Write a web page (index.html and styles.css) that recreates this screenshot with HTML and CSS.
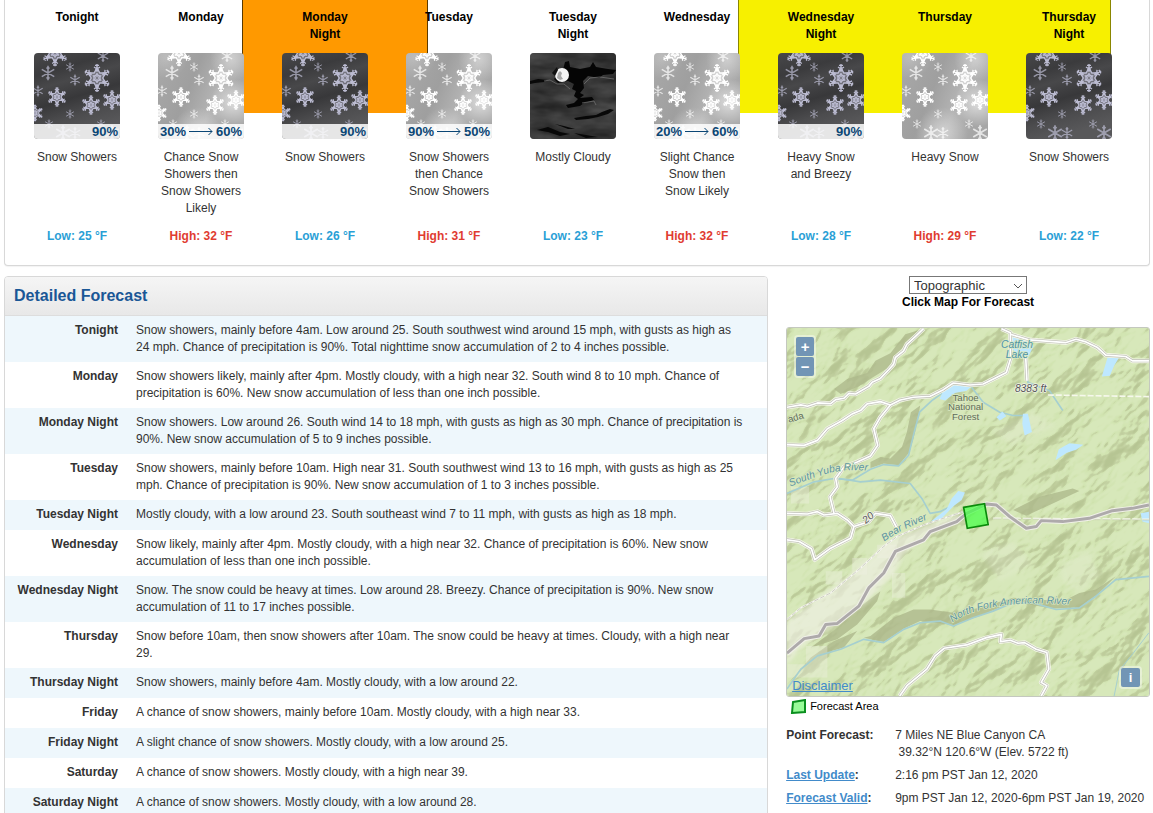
FILE: index.html
```html
<!DOCTYPE html>
<html lang="en">
<head>
  <meta charset="UTF-8">
  <meta name="viewport" content="width=device-width, initial-scale=1">
  <title>7-Day Forecast</title>
  <link rel="stylesheet" href="styles.css">
</head>
<body>

  <!-- shared icon artwork -->
  <svg class="defs" aria-hidden="true">
    <defs>
      <linearGradient id="nightSky" x1="0" y1="0" x2="0.3" y2="1">
        <stop offset="0" stop-color="#48484a"/>
        <stop offset="0.25" stop-color="#3b3b3d"/>
        <stop offset="0.4" stop-color="#48484a"/>
        <stop offset="0.6" stop-color="#38383a"/>
        <stop offset="0.8" stop-color="#4c4c4e"/>
        <stop offset="1" stop-color="#58585a"/>
      </linearGradient>
      <linearGradient id="daySky" x1="0" y1="0" x2="1" y2="0.4">
        <stop offset="0" stop-color="#a9a9a9"/>
        <stop offset="0.45" stop-color="#9f9f9f"/>
        <stop offset="0.75" stop-color="#b4b4b4"/>
        <stop offset="1" stop-color="#a6a6a6"/>
      </linearGradient>
      <radialGradient id="glow">
        <stop offset="0" stop-color="#fff" stop-opacity="0.6"/>
        <stop offset="1" stop-color="#fff" stop-opacity="0"/>
      </radialGradient>
      <g id="arm">
        <path d="M0-6V-14M-2-12.6H2M-3-11L0-9L3-11M-1.8-8.4L0-7L1.8-8.4M0-1V-5"/>
      </g>
      <g id="flake">
        <path fill="currentColor" fill-opacity="0.4" d="M0-10L2.9-5L8.7-5L5.8 0L8.7 5L2.9 5L0 10L-2.9 5L-8.7 5L-5.8 0L-8.7-5L-2.9-5Z"/>
        <use href="#arm"/>
        <use href="#arm" transform="rotate(60)"/>
        <use href="#arm" transform="rotate(120)"/>
        <use href="#arm" transform="rotate(180)"/>
        <use href="#arm" transform="rotate(240)"/>
        <use href="#arm" transform="rotate(300)"/>
        <path d="M0-3.5L3-1.8V1.8L0 3.5L-3 1.8V-1.8Z"/>
      </g>
      <g id="star">
        <path d="M0-6V6M-5.2-3L5.2 3M-5.2 3L5.2-3M-1.2-4.6L0-3.2L1.2-4.6M-1.2 4.6L0 3.2L1.2 4.6"/>
      </g>
      <g id="flakes" fill="none">
        <g stroke-width="1.4">
          <use href="#flake" transform="translate(63 25)"/>
          <use href="#flake" transform="translate(21 0) scale(0.95)"/>
        </g>
        <g stroke-width="1.7">
          <use href="#flake" transform="translate(23 44) scale(0.7)"/>
          <use href="#flake" transform="translate(57 52) scale(0.7)"/>
          <use href="#flake" transform="translate(78 47) scale(0.7)"/>
          <use href="#flake" transform="translate(1 60) scale(0.6)"/>
        </g>
        <g stroke-width="1.3" opacity="0.7">
          <use href="#star" transform="translate(14 20) scale(1.2)"/>
          <use href="#star" transform="translate(36 14) scale(0.75)"/>
          <use href="#star" transform="translate(41 27) scale(0.9)"/>
          <use href="#star" transform="translate(69 3)"/>
          <use href="#star" transform="translate(4 38) scale(0.9)"/>
          <use href="#star" transform="translate(36 61) scale(0.75)"/>
          <use href="#star" transform="translate(15 71) scale(0.75)"/>
          <use href="#star" transform="translate(67 71) scale(0.75)"/>
          <use href="#star" transform="translate(29 80) scale(1.3)"/>
          <use href="#star" transform="translate(41 80)"/>
          <use href="#star" transform="translate(78 80) scale(1.3)"/>
        </g>
      </g>
      <symbol id="nightSnow" viewBox="0 0 86 86">
        <rect width="86" height="86" fill="url(#nightSky)"/>
        <use href="#flakes" stroke="#bcbcd2" color="#bcbcd2"/>
      </symbol>
      <symbol id="daySnow" viewBox="0 0 86 86">
        <rect width="86" height="86" fill="url(#daySky)"/>
        <circle cx="76" cy="50" r="24" fill="url(#glow)"/>
        <circle cx="8" cy="4" r="22" fill="url(#glow)" opacity="0.4"/>
        <circle cx="40" cy="80" r="26" fill="url(#glow)" opacity="0.7"/>
        <circle cx="74" cy="6" r="22" fill="url(#glow)" opacity="0.6"/>
        <use href="#flakes" stroke="#fff" color="#fff"/>
      </symbol>
      <filter id="cloudNoise" x="0" y="0" width="1" height="1" color-interpolation-filters="sRGB">
        <feTurbulence type="fractalNoise" baseFrequency="0.03 0.08" numOctaves="3" seed="4"/>
        <feColorMatrix values="0.4 0 0 0 0.02  0.4 0 0 0 0.02  0.4 0 0 0 0.02  0 0 0 0 1"/>
      </filter>
      <symbol id="nightCloud" viewBox="0 0 86 86">
        <rect width="86" height="86" fill="#3c3c3c"/>
        <rect width="86" height="86" filter="url(#cloudNoise)" opacity="0.6"/>
        <path fill="#050505" d="M33 17L35 9L39 8L40 14L50 16L60 14L63 9L66 14L78 16L86 17L83 21L73 22L69 25L58 23L53 28L54 35L50 40L54 42L50 45L62 44L64 47L54 50L50 53L38 55L36 52L44 50L48 46L44 43L46 38L42 36L44 31L38 28L28 30L24 26L28 22Z"/>
        <path fill="#080808" d="M0 28L8 26L17 27L14 29L5 30L0 31ZM44 65L56 63L66 62L72 59L80 56L84 57L78 61L68 64L58 66L46 67ZM25 71L34 73L45 76L38 76ZM7 77L18 74L30 79L40 81L30 83L18 79ZM44 80L56 82L68 84L56 85Z"/>
        <path fill="none" stroke="#777" stroke-width="0.7" d="M14 28L20 27L27 31L34 31L40 36M54 31L60 25L70 24L84 26M52 50L64 48L66 52"/>
        <circle cx="32" cy="22" r="7" fill="#f4f4f4"/>
        <path fill="#a8a8a8" d="M28 20L30 18L32 20L31 23L33 26L30 27L27 25Z"/>
        <path fill="#111" d="M27 14L22 20L25 23L28 17Z"/>
      </symbol>
      <symbol id="arrow" viewBox="0 0 24 9">
        <path d="M0 4.5H23M19.5 1L23 4.5L19.5 8" fill="none" stroke="#0b4675"/>
      </symbol>
    </defs>
  </svg>

  <main class="page">
    <section class="panel seven-day">
      <div class="timeline">
        <div class="hazard hazard-warning"></div>
        <div class="hazard hazard-watch"></div>
        <ul class="periods">
          <li class="period">
            <p class="period-name">Tonight</p>
            <div class="tile"><svg><use href="#nightSnow"/></svg><div class="chance">90%</div></div>
            <p class="desc">Snow Showers</p>
            <p class="temp low">Low: 25 °F</p>
          </li>
          <li class="period">
            <p class="period-name">Monday</p>
            <div class="tile"><svg><use href="#daySnow"/></svg><div class="chance range">30%<svg class="arrow"><use href="#arrow"/></svg>60%</div></div>
            <p class="desc">Chance Snow Showers then Snow Showers Likely</p>
            <p class="temp high">High: 32 °F</p>
          </li>
          <li class="period">
            <p class="period-name">Monday<br>Night</p>
            <div class="tile"><svg><use href="#nightSnow"/></svg><div class="chance">90%</div></div>
            <p class="desc">Snow Showers</p>
            <p class="temp low">Low: 26 °F</p>
          </li>
          <li class="period">
            <p class="period-name">Tuesday</p>
            <div class="tile"><svg><use href="#daySnow"/></svg><div class="chance range">90%<svg class="arrow"><use href="#arrow"/></svg>50%</div></div>
            <p class="desc">Snow Showers then Chance Snow Showers</p>
            <p class="temp high">High: 31 °F</p>
          </li>
          <li class="period">
            <p class="period-name">Tuesday<br>Night</p>
            <div class="tile"><svg><use href="#nightCloud"/></svg></div>
            <p class="desc">Mostly Cloudy</p>
            <p class="temp low">Low: 23 °F</p>
          </li>
          <li class="period">
            <p class="period-name">Wednesday</p>
            <div class="tile"><svg><use href="#daySnow"/></svg><div class="chance range">20%<svg class="arrow"><use href="#arrow"/></svg>60%</div></div>
            <p class="desc">Slight Chance Snow then Snow Likely</p>
            <p class="temp high">High: 32 °F</p>
          </li>
          <li class="period">
            <p class="period-name">Wednesday<br>Night</p>
            <div class="tile"><svg><use href="#nightSnow"/></svg><div class="chance">90%</div></div>
            <p class="desc">Heavy Snow and Breezy</p>
            <p class="temp low">Low: 28 °F</p>
          </li>
          <li class="period">
            <p class="period-name">Thursday</p>
            <div class="tile"><svg><use href="#daySnow"/></svg></div>
            <p class="desc">Heavy Snow</p>
            <p class="temp high">High: 29 °F</p>
          </li>
          <li class="period">
            <p class="period-name">Thursday<br>Night</p>
            <div class="tile"><svg><use href="#nightSnow"/></svg></div>
            <p class="desc">Snow Showers</p>
            <p class="temp low">Low: 22 °F</p>
          </li>
        </ul>
      </div>
    </section>

    <div class="columns">
      <section class="panel detailed">
        <h2>Detailed Forecast</h2>
        <table>
          <tbody>
            <tr><th scope="row">Tonight</th><td>Snow showers, mainly before 4am. Low around 25. South southwest wind around 15 mph, with gusts as high as 24 mph. Chance of precipitation is 90%. Total nighttime snow accumulation of 2 to 4 inches possible.</td></tr>
            <tr><th scope="row">Monday</th><td>Snow showers likely, mainly after 4pm. Mostly cloudy, with a high near 32. South wind 8 to 10 mph. Chance of precipitation is 60%. New snow accumulation of less than one inch possible.</td></tr>
            <tr><th scope="row">Monday Night</th><td>Snow showers. Low around 26. South wind 14 to 18 mph, with gusts as high as 30 mph. Chance of precipitation is 90%. New snow accumulation of 5 to 9 inches possible.</td></tr>
            <tr><th scope="row">Tuesday</th><td>Snow showers, mainly before 10am. High near 31. South southwest wind 13 to 16 mph, with gusts as high as 25 mph. Chance of precipitation is 90%. New snow accumulation of 1 to 3 inches possible.</td></tr>
            <tr><th scope="row">Tuesday Night</th><td>Mostly cloudy, with a low around 23. South southeast wind 7 to 11 mph, with gusts as high as 18 mph.</td></tr>
            <tr><th scope="row">Wednesday</th><td>Snow likely, mainly after 4pm. Mostly cloudy, with a high near 32. Chance of precipitation is 60%. New snow accumulation of less than one inch possible.</td></tr>
            <tr><th scope="row">Wednesday Night</th><td>Snow. The snow could be heavy at times. Low around 28. Breezy. Chance of precipitation is 90%. New snow accumulation of 11 to 17 inches possible.</td></tr>
            <tr><th scope="row">Thursday</th><td>Snow before 10am, then snow showers after 10am. The snow could be heavy at times. Cloudy, with a high near 29.</td></tr>
            <tr><th scope="row">Thursday Night</th><td>Snow showers, mainly before 4am. Mostly cloudy, with a low around 22.</td></tr>
            <tr><th scope="row">Friday</th><td>A chance of snow showers, mainly before 10am. Mostly cloudy, with a high near 33.</td></tr>
            <tr><th scope="row">Friday Night</th><td>A slight chance of snow showers. Mostly cloudy, with a low around 25.</td></tr>
            <tr><th scope="row">Saturday</th><td>A chance of snow showers. Mostly cloudy, with a high near 39.</td></tr>
            <tr><th scope="row">Saturday Night</th><td>A chance of snow showers. Mostly cloudy, with a low around 28.</td></tr>
          </tbody>
        </table>
      </section>

      <aside class="side">
        <div class="map-head">
          <div class="select-wrap">
            <select id="basemap" aria-label="Map type">
              <option>Topographic</option>
              <option>Streets</option>
              <option>Satellite</option>
            </select>
            <svg class="chevron" viewBox="0 0 10 6" aria-hidden="true"><path d="M1 1L5 5L9 1" fill="none" stroke="#555"/></svg>
          </div>
          <label for="basemap">Click Map For Forecast</label>
        </div>

        <div class="map">
          <svg class="map-canvas" viewBox="18 186 1092 1110" preserveAspectRatio="xMidYMid slice">
            <defs>
              <filter id="relief" x="0" y="0" width="1" height="1" color-interpolation-filters="sRGB">
                <feTurbulence type="fractalNoise" baseFrequency="0.006 0.011" numOctaves="4" seed="11"/>
                <feColorMatrix values="0 0 0 0 0  0 0 0 0 0  0 0 0 0 0  1 0 0 0 0"/>
                <feDiffuseLighting surfaceScale="42" diffuseConstant="1.15" lighting-color="#fff">
                  <feDistantLight azimuth="270" elevation="50"/>
                </feDiffuseLighting>
                <feComponentTransfer>
                  <feFuncR type="table" tableValues="0.68 0.70 0.72 0.75 0.82 0.83 0.85"/>
                  <feFuncG type="table" tableValues="0.73 0.75 0.77 0.80 0.89 0.90 0.91"/>
                  <feFuncB type="table" tableValues="0.54 0.56 0.58 0.62 0.69 0.71 0.74"/>
                </feComponentTransfer>
              </filter>
              <filter id="soft"><feGaussianBlur stdDeviation="6"/></filter>
              <filter id="edge"><feGaussianBlur stdDeviation="2"/></filter>
              <path id="yubaPath" d="M28 664Q90 640 140 625T275 618"/>
              <path id="bearPath" d="M312 830Q350 800 445 762"/>
              <path id="forkPath" d="M518 1075Q560 1040 660 1025T880 1022"/>
              <g id="roads">
                <path d="M18 425L60 418L80 422L110 412L150 414L165 402L190 398L205 383L225 385L265 362L275 350L300 338L325 312L340 295L345 275L370 255L380 235L405 212L430 188"/>
                <path d="M18 538L70 540L110 525L140 490L185 465L215 445L240 435L260 415L300 408L330 418L360 403L400 395L450 392L490 372L520 352L570 358L610 355L650 335L680 320L692 280L692 200L665 188"/>
                <path d="M330 418L300 455L280 490L292 540L270 572L230 590L190 605L165 640L170 665L148 695L160 745"/>
                <path d="M692 205L750 222L860 230L890 220L920 228L955 245L980 268L1040 272L1060 285L1110 285"/>
                <path d="M738 270L742 345"/>
                <path d="M18 745L80 747L110 740L130 750L170 745L200 765L220 785L265 770L285 745L330 752L350 790"/>
                <path d="M220 785L210 820L150 850L102 885L92 852L55 830L18 825"/>
                <path d="M358 1296L380 1265L440 1215L465 1175L492 1152L560 1142L620 1120L665 1110L662 1132L692 1128L715 1137L735 1135L770 1155L802 1165L808 1215L785 1255L802 1265L785 1296"/>
              </g>
              <path id="highway" d="M18 1167L70 1123L115 1115L135 1080L170 1077L235 1025L265 970L310 925L345 860L430 825L450 800L530 770L560 745L620 717L650 720L690 755L740 790L770 785L785 767L850 770L930 760L1000 737L1060 730L1110 720"/>
            </defs>

            <rect x="18" y="186" width="1092" height="1110" fill="#d4e5b4"/>
            <g transform="rotate(-42 564 741)" opacity="0.75">
              <rect x="-260" y="-80" width="1650" height="1650" filter="url(#relief)"/>
            </g>

            <!-- canyon shadows -->
            <g fill="#aeb98c" opacity="0.8" filter="url(#edge)">
              <path d="M160 370L200 340L260 322L285 285L330 262L375 205L425 190L400 215L350 262L325 305L285 330L235 362L180 385Z"/>
              <path d="M270 590L300 575L330 580L365 545L380 500L392 440L420 420L405 500L388 560L355 600L310 595L270 608Z"/>
              <path d="M270 1115L340 1060L400 1035L450 1035L520 1045L600 1030L700 1000L850 1010L900 985L950 975L1010 935L990 955L955 990L900 1028L820 1032L700 1012L600 1055L520 1082L420 1070L370 1093L310 1133L250 1120Z"/>
              <path d="M20 1260L90 1180L160 1130L230 1100L190 1150L110 1172L50 1230Z"/>
              <path d="M700 735L780 695L880 670L900 678L820 715L740 752Z"/>
              <path d="M90 1150L170 1090L220 1040L300 980L290 1010L230 1080L170 1125Z"/>
            </g>

            <!-- bare ground along the highway -->
            <g fill="#f1f1e6">
              <path opacity="0.65" filter="url(#soft)" d="M18 1070L110 1000L240 910L320 830L440 780L540 745L540 770L440 810L370 870L340 930L260 1010L180 1070L60 1150L18 1200Z"/>
              <path opacity="0.35" d="M30 665H85V715H30ZM135 920H185V960H135ZM215 880H260V930H215ZM335 925H375V1000H335ZM75 1145H140V1240H20V1200H75ZM290 840H350V880H290Z"/>
              <path opacity="0.2" filter="url(#soft)" d="M840 900L930 860L960 930L900 980L850 950ZM600 860L700 830L760 900L660 950ZM640 500L760 440L830 480L700 540Z"/>
            </g>

            <!-- water -->
            <g fill="none" stroke="#a5cfd0" stroke-width="5" stroke-linejoin="round">
              <path d="M18 685L100 650L160 640L215 645L270 612L310 598L355 602L385 570L402 500L418 440L455 405L490 380"/>
              <path d="M175 640L240 650L300 645L390 655L425 700L450 745L480 740L520 720"/>
              <path d="M575 365L610 410L660 440L700 450L740 450"/>
              <path d="M700 220L740 280L745 350L810 375L850 435"/>
              <path d="M18 1275L60 1215L110 1175L180 1155L250 1125L310 1135L370 1095L420 1075L480 1070L520 1085L580 1060L640 1040L700 1015L760 1015L830 1035L900 1030L950 995L1010 945L1110 935"/>
              <path d="M1110 1105L1060 1170L1020 1220L1005 1296" stroke-width="3"/>
            </g>
            <g fill="#bee8ff">
              <path d="M478 400L490 375L525 353L580 358L560 375L525 382L495 405Z"/>
              <path d="M650 455L668 438L680 452L660 465Z"/>
              <path d="M730 445L745 445L757 500L735 510L728 475Z"/>
              <path d="M828 585L838 552L870 534L912 538L890 553L862 562Z"/>
              <path d="M968 332L985 275L1020 275L1005 300L992 330Z"/>
              <path d="M692 205L740 218L762 240L740 285L715 268L690 240Z"/>
              <path d="M500 732L515 700L535 678L555 682L545 705L522 722L480 765L452 770Z"/>
              <path d="M1085 745L1110 740V775L1090 770Z"/>
            </g>

            <!-- boundary lines -->
            <g fill="none" stroke-width="5">
              <path d="M805 388L1110 393" stroke="#f6f8ec" stroke-dasharray="18 6"/>
              <path d="M640 760L1110 763" stroke="#f6f8ec" stroke-dasharray="24 6"/>
              <path d="M640 762L1110 765" stroke="#bcc5a5" stroke-width="2" stroke-dasharray="24 6"/>
              <path d="M18 1065L60 1030L150 985L240 910L310 845L350 815L430 780L550 740" stroke="#f6f6ef"/>
              <path d="M18 1065L60 1030L150 985L240 910L310 845L350 815L430 780L550 740" stroke="#b9b9ad" stroke-width="2" stroke-dasharray="14 6"/>
            </g>

            <!-- roads: pale halo, grey edges, white core -->
            <g fill="none" stroke-linejoin="round">
              <use href="#roads" stroke="#f2f5e6" stroke-width="14"/>
              <use href="#roads" stroke="#bfc0b6" stroke-width="9"/>
              <use href="#roads" stroke="#fff" stroke-width="5"/>
              <use href="#highway" stroke="#f0f0e8" stroke-width="15"/>
              <use href="#highway" stroke="#aeaaab" stroke-width="9"/>
            </g>

            <g class="map-labels">
              <text class="water-label" x="712" y="246" text-anchor="middle">Catfish</text>
              <text class="water-label" x="712" y="278" text-anchor="middle">Lake</text>
              <text class="peak-label" x="753" y="380" text-anchor="middle">8383 ft</text>
              <g class="forest-label" text-anchor="middle">
                <text x="557" y="405">Tahoe</text>
                <text x="557" y="434">National</text>
                <text x="557" y="463">Forest</text>
              </g>
              <text class="forest-label" transform="translate(24 472) rotate(-17)">ada</text>
              <text class="peak-label" transform="translate(256 777) rotate(-40)">20</text>
              <text class="river-label"><textPath href="#yubaPath">South Yuba River</textPath></text>
              <text class="river-label"><textPath href="#bearPath">Bear River</textPath></text>
              <text class="river-label"><textPath href="#forkPath">North Fork American River</textPath></text>
            </g>

            <path d="M551 727L614 716L625 779L562 790Z" fill="#4bff4b" fill-opacity="0.75" stroke="#0b8a0b" stroke-width="5"/>
          </svg>
          <div class="zoom-box">
            <button type="button" aria-label="Zoom in">+</button>
            <button type="button" aria-label="Zoom out">−</button>
          </div>
          <a class="disclaimer" href="#">Disclaimer</a>
          <div class="info-box"><button type="button" aria-label="Attributions">i</button></div>
        </div>

        <div class="legend">
          <svg viewBox="0 0 16 15" aria-hidden="true"><path d="M3 3L15 1V13L2 14Z" fill="#98fb98" stroke="#0a8f1e" stroke-width="2"/></svg>
          Forecast Area
        </div>

        <dl class="about">
          <dt>Point Forecast:</dt>
          <dd>7 Miles NE Blue Canyon CA<br>&nbsp;39.32°N 120.6°W (Elev. 5722 ft)</dd>
          <dt><a href="#">Last Update</a>:</dt>
          <dd>2:16 pm PST Jan 12, 2020</dd>
          <dt><a href="#">Forecast Valid</a>:</dt>
          <dd>9pm PST Jan 12, 2020-6pm PST Jan 19, 2020</dd>
        </dl>
      </aside>
    </div>
  </main>

</body>
</html>
```
FILE: styles.css
```css
* { box-sizing: border-box; }
html { scrollbar-width: none; }
body { margin: 0; background: #fff; color: #333; font: 12px/17px "Liberation Sans", Arial, sans-serif; }
p, ul, dl, dd { margin: 0; padding: 0; }
a { color: #428bca; }
.defs { position: absolute; width: 0; height: 0; }
.page { padding: 0 3px 0 4px; }
.panel { border: 1px solid #d8d8d8; border-radius: 4px; background: #fff; }

/* seven day strip */
.seven-day { border-top: 0; border-radius: 0 0 4px 4px; padding: 0 18px 20px 10px; box-shadow: 0 1px 1px rgba(0, 0, 0, 0.05); }
.timeline { position: relative; }
.hazard { position: absolute; top: 0; height: 113px; border: solid #5b3a00; border-width: 0 1px; }
.hazard-warning { left: 20.3%; width: 16.7%; background: #ff9900; }
.hazard-watch { left: 64.8%; width: 33.4%; background: #f7f000; border-color: #8a8600; }
.periods { position: relative; display: grid; grid-template-columns: repeat(9, minmax(0, 1fr)); list-style: none; }
.period { display: flex; flex-direction: column; align-items: center; text-align: center; }
.period-name { height: 53px; padding-top: 9px; color: #000; font-weight: bold; }
.tile { position: relative; width: 86px; height: 86px; border-radius: 4px; overflow: hidden; }
.tile > svg { display: block; width: 86px; height: 86px; }
.chance { position: absolute; left: 0; right: 0; bottom: 0; height: 15px; padding: 0 2px; background: rgba(255, 255, 255, 0.85); color: #0b4675; font-size: 13px; line-height: 15px; font-weight: bold; text-align: right; }
.range { display: flex; align-items: center; justify-content: space-between; }
.arrow { width: 24px; height: 9px; }
.desc { width: 86px; min-height: 68px; margin-top: 10px; }
.temp { margin-top: 11px; font-weight: bold; }
.low { color: #2a9fd6; }
.high { color: #e03c31; }

.columns { display: grid; grid-template-columns: minmax(0, 21fr) minmax(0, 10fr); gap: 18px; margin-top: 10px; }

/* detailed forecast */
.detailed { overflow: hidden; }
.detailed h2 { margin: 0; padding: 10px 9px; border-bottom: 1px solid #ddd; background: linear-gradient(#f5f5f5, #e8e8e8); color: #1a5796; font-size: 16px; line-height: 18px; }
table { width: 100%; border-collapse: collapse; }
tr { height: 30px; }
tr:nth-child(odd) { background: #eef7fc; }
th, td { padding: 6px 22px 6px 9px; text-align: left; vertical-align: top; }
th { width: 122px; padding: 6px 9px 6px 0; text-align: right; white-space: nowrap; }

/* map column */
.map-head { display: flex; flex-direction: column; align-items: center; }
.map-head label { color: #000; font-weight: bold; }
.select-wrap { position: relative; width: 118px; }
.select-wrap select { display: block; appearance: none; width: 100%; height: 18px; padding: 0 4px; border: 1px solid #777; border-radius: 0; background: #fff; color: #333; font: 13px "Liberation Sans", Arial, sans-serif; }
.chevron { position: absolute; right: 4px; top: 7px; width: 10px; height: 6px; pointer-events: none; }
.map { position: relative; height: 370px; margin-top: 16px; border: 1px solid #c4c8bf; border-radius: 3px; overflow: hidden; }
.map-canvas { display: block; width: 100%; height: 100%; }
.map-labels { stroke: #dbe9c2; stroke-width: 4; paint-order: stroke; }
.water-label { fill: #4d93a8; font-size: 31px; font-style: italic; }
.river-label { fill: #5b93a0; font-size: 31px; font-style: italic; }
.forest-label { fill: #5f6d57; font-size: 29px; }
.peak-label { fill: #555; font-size: 31px; font-style: italic; stroke: #f2f4ea; }
.zoom-box, .info-box { position: absolute; padding: 2px; border-radius: 4px; background: rgba(255, 255, 255, 0.4); }
.zoom-box { left: 7px; top: 7px; display: grid; gap: 1px; }
.info-box { right: 7px; bottom: 7px; }
.map button { display: block; width: 18px; height: 19px; padding: 0; border: 0; border-radius: 2px; background: #7295b5; color: #fff; font: bold 15px/19px "Liberation Sans", Arial, sans-serif; }
.map .info-box button { width: 19px; font-size: 13px; }
.disclaimer { position: absolute; left: 5px; bottom: 2px; font-size: 13px; }
.legend { display: flex; align-items: center; gap: 4px; margin-top: 1px; padding-left: 4px; color: #000; font-size: 11px; }
.legend svg { width: 16px; height: 15px; }
.about { display: grid; grid-template-columns: 109px minmax(0, 1fr); row-gap: 6px; margin-top: 12px; white-space: nowrap; }
.about dt { font-weight: bold; }
```
